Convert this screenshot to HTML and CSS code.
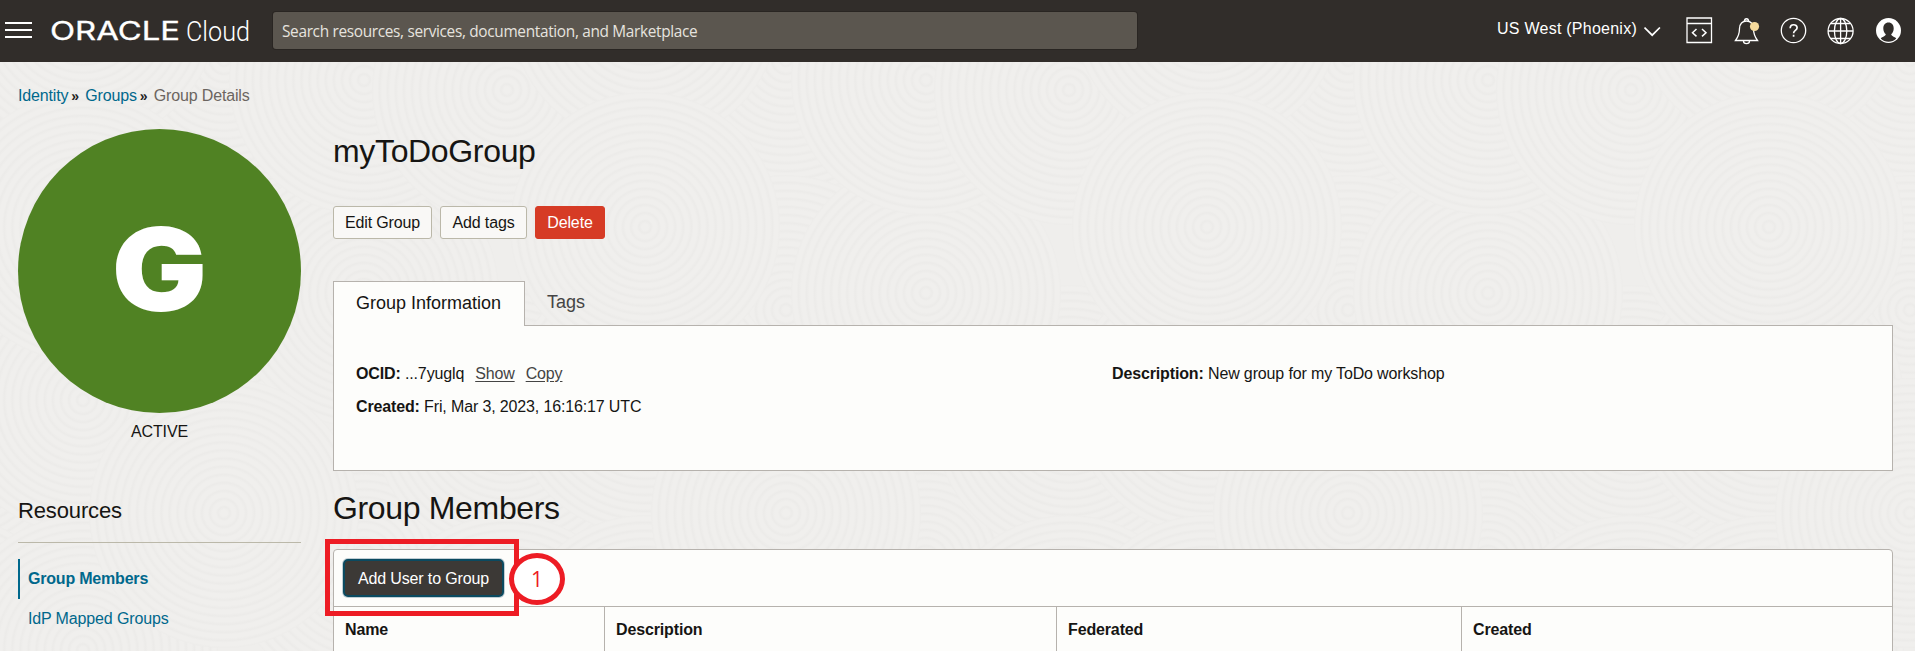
FILE: index.html
```html
<!DOCTYPE html>
<html lang="en">
<head>
<meta charset="utf-8">
<title>Group Details</title>
<link rel="stylesheet" href="styles.css">
</head>
<body>
<svg class="texture" width="1915" height="651" aria-hidden="true">
  <defs>
    <radialGradient id="rings" cx="0.5" cy="0.5" r="0.03" spreadMethod="repeat">
      <stop offset="0" stop-color="#f0efed"/>
      <stop offset="0.4" stop-color="#f0efed"/>
      <stop offset="0.75" stop-color="#ecebe9"/>
      <stop offset="1" stop-color="#f0efed"/>
    </radialGradient>
    <circle id="disc" r="135" fill="url(#rings)"/>
    <g id="tile">
      <use href="#disc" x="141" y="60"/><use href="#disc" x="0" y="10"/>
      <use href="#disc" x="141" y="310"/><use href="#disc" x="281" y="560"/>
      <use href="#disc" x="424" y="420"/><use href="#disc" x="0" y="400"/>
      <use href="#disc" x="281" y="293"/><use href="#disc" x="0" y="227"/>
      <use href="#disc" x="281" y="80"/><use href="#disc" x="424" y="90"/>
      <use href="#disc" x="424" y="650"/><use href="#disc" x="0" y="650"/>
      <use href="#disc" x="141" y="513"/>
    </g>
  </defs>
  <rect width="1915" height="651" fill="#efeeec"/>
  <use href="#tile" x="-479"/><use href="#tile" x="83"/><use href="#tile" x="645"/><use href="#tile" x="1207"/><use href="#tile" x="1769"/>
</svg>

<header class="topbar">
  <svg class="menu" width="27" height="16" viewBox="0 0 27 16"><path d="M0 1h27M0 8h27M0 15h27" stroke="#fff" stroke-width="2"/></svg>
  <svg class="logo" width="204" height="34" viewBox="0 0 204 34" fill="#fff">
    <text class="logo-oracle" x="0" y="24" textLength="130" lengthAdjust="spacingAndGlyphs">ORACLE</text>
    <text class="logo-cloud" x="136" y="24.500" textLength="64" lengthAdjust="spacingAndGlyphs">Cloud</text>
  </svg>
  <div class="search"><span>Search resources, services, documentation, and Marketplace</span></div>
  <div class="region">US West (Phoenix)</div>
  <svg class="icons" width="271" height="32" viewBox="1645 15 271 32" fill="none" stroke="#fff" stroke-width="1.3">
    <path d="M1645.500 27.500l7.700 7.700 7.700-7.700" stroke-width="1.700"/>
    <path d="M1688 18h24.500v24.500h-24.500zM1688 23.500h24.500"/>
    <path d="M1697.500 29l-4 3.700 4 3.700M1703 29l4 3.700-4 3.700" stroke-width="1.500"/>
    <path d="M1736.500 40.500h22c-3-4-4-7-4-12 0-4.500-3-7.500-7-7.500s-7 3-7 7.500c0 5-1 8-4 12z"/>
    <path d="M1745.500 21c0-3 4-3 4 0M1744.500 41c0 3.500 6 3.500 6 0"/>
    <circle cx="1755.500" cy="26.500" r="4.600" fill="#f6da9c" stroke="none"/>
    <circle cx="1794.500" cy="30.500" r="12.200"/>
    <path d="M1791.200 28.200c0-4.600 6.900-4.400 6.900-.4 0 2.600-3.500 2.600-3.500 5.400M1794.600 34.700v2" stroke-width="1.700"/>
    <circle cx="1841.600" cy="31" r="12.500"/>
    <ellipse cx="1841.600" cy="31" rx="6.200" ry="12.500"/>
    <path d="M1841.600 18.500v25M1829 31h25M1831.500 23.500h20.200M1831.500 38.500h20.200"/>
    <circle cx="1889.500" cy="30.500" r="12.500" fill="#fff" stroke="none"/>
    <path d="M1889.500 22.500c-3.300 0-5.200 2.500-5.200 6 0 2.500 1 4.500 2.500 5.800-.3 2.200-3.500 2.400-5 4.200 3.800 4.400 11.600 4.400 15.400 0-1.500-1.800-4.700-2-5-4.200 1.500-1.300 2.500-3.300 2.500-5.800 0-3.500-1.900-6-5.200-6z" fill="#312d2a" stroke="none"/>
  </svg>
</header>

<nav class="crumbs"><a>Identity</a><i>»</i><a>Groups</a><i>»</i><span>Group Details</span></nav>

<div class="page">
  <aside class="side">
    <div class="avatar"><span>G</span></div>
    <div class="state">ACTIVE</div>
    <h2 class="side-title">Resources</h2>
    <a class="side-link active">Group Members</a>
    <a class="side-link">IdP Mapped Groups</a>
  </aside>
  <main class="main">
    <h1 class="title">myToDoGroup</h1>
    <div class="actions">
      <button class="btn edit">Edit Group</button>
      <button class="btn tags">Add tags</button>
      <button class="btn delete">Delete</button>
    </div>
    <div class="tabs"><div class="tab current">Group Information</div><div class="tab">Tags</div></div>
    <section class="info">
      <div class="col">
        <p><b>OCID:</b> <span class="ocid">...7yuglq</span><u>Show</u><u>Copy</u></p>
        <p><b>Created:</b> Fri, Mar 3, 2023, 16:16:17 UTC</p>
      </div>
      <div class="col"><p><b>Description:</b> New group for my ToDo workshop</p></div>
    </section>
    <h1 class="title members">Group Members</h1>
    <section class="table">
      <div class="tools">
        <button class="add">Add User to Group</button>
        <div class="mark-box"></div>
        <div class="mark-num">1</div>
      </div>
      <div class="thead"><div>Name</div><div>Description</div><div>Federated</div><div>Created</div></div>
    </section>
  </main>
</div>
</body>
</html>
```
FILE: styles.css
```css
* { box-sizing: border-box; }
body {
  margin: 0; width: 1916px; height: 651px; overflow: hidden; position: relative;
  border-right: 1px solid #fff; background: #efeeec;
  font: 16px/20px "Liberation Sans", Arial, sans-serif; letter-spacing: -0.14px; color: #161513;
}
.texture { position: absolute; left: 0; top: 0; z-index: -1; }
.topbar { display: flex; height: 62px; background: #312d2a; align-items: flex-start; }
.menu { margin: 22px 0 0 5px; flex: none; }
.logo { margin: 16px 0 0 18px; flex: none; overflow: visible; letter-spacing: 0; }
.logo-oracle { font: 400 25px Inter, sans-serif; stroke: #fff; stroke-width: 0.3px; }
.logo-cloud { font: 300 27px Roboto, sans-serif; }
.search {
  margin: 12px 0 0 19px; width: 864px; height: 37px; flex: none; border-radius: 3px;
  background: #5b564f; box-shadow: 0 0 0 1px #292522; color: #e6e3df;
  font: 15.4px/39px "Open Sans", "Noto Sans", sans-serif; letter-spacing: -0.33px; padding-left: 9px; white-space: nowrap;
}
.region { margin: 19px 0 0 360px; width: 148px; color: #fff; white-space: nowrap; letter-spacing: 0.25px; }
.icons { margin-top: 15px; margin-left: 1px; flex: none; }
.crumbs { display: flex; height: 67px; padding: 24px 0 0 18px; color: #6b6560; letter-spacing: -0.16px; }
.crumbs a { color: #00688c; }
.crumbs i { font-style: normal; font-weight: bold; font-size: 14px; color: #222; width: 17px; padding-left: 3px; }
.page { display: flex; }
.side { width: 333px; padding-left: 18px; }
.avatar {
  width: 283px; height: 284px; border-radius: 50%; background: #508223; color: #fff;
  font: 900 115px/282px Inter, sans-serif; letter-spacing: 0; text-align: center;
}
.avatar span { display: inline-block; transform: scaleX(1.1); }
.state { width: 283px; text-align: center; margin-top: 9px; }
.side-title {
  width: 283px; margin: 57px 0 16px; height: 44px; border-bottom: 1px solid #bbb8a9;
  font-size: 22px; line-height: 24px; font-weight: normal;
}
.side-link { display: block; height: 40px; line-height: 40px; padding-left: 10px; color: #00688c; }
.side-link.active { font-weight: bold; letter-spacing: -0.2px; border-left: 2px solid #00688c; padding-left: 8px; }
.main { width: 1560px; }
.title { margin: 4px 0 0; font-size: 32px; line-height: 36px; font-weight: normal; letter-spacing: -0.34px; }
.actions { display: flex; gap: 8px; margin-top: 37px; }
.btn {
  height: 33px; border: 1px solid #bbb8a9; border-radius: 3px; background: #f9f8f6; padding: 0;
  font: inherit; letter-spacing: -0.14px; color: #161513;
}
.edit { width: 99px; }
.tags { width: 87px; }
.delete { width: 70px; background: #d63b25; border-color: #d63b25; color: #fff; }
.tabs { display: flex; margin-top: 42px; font-size: 18px; height: 44px; letter-spacing: 0; }
.tab { line-height: 42px; padding: 0 22px; color: #444; }
.tab.current {
  width: 192px; height: 45px; padding: 0 22px; background: #fdfdfb; border: 1px solid #b6b2ad;
  border-bottom: 0; color: #161513; position: relative; z-index: 1; white-space: nowrap;
}
.info {
  display: grid; grid-template-columns: 756px 1fr; height: 146px; padding: 38px 0 0 22px;
  border: 1px solid #b6b2ad; background: #fdfdfb;
}
.info p { margin: 0 0 13px; }
.info u { margin-left: 11px; color: #444; text-underline-offset: 2px; }
.members { margin-top: 19px; }
.table { margin-top: 23px; border: 1px solid #b6b2ad; border-radius: 4px 4px 0 0; background: #fdfdfb; height: 110px; }
.tools { position: relative; height: 57px; padding: 9px 0 0 9px; border-bottom: 1px solid #b6b2ad; }
.add {
  width: 161px; height: 38px; border: 2px solid #0b4a60; border-radius: 5px; background: #3c3936; padding: 1px 0 0;
  box-shadow: 0 0 0 1px #c1ced4; font: inherit; letter-spacing: -0.14px; color: #fff;
}
.mark-box { position: absolute; left: -9px; top: -11px; width: 194px; height: 77px; border: 5px solid #ed1c24; }
.mark-num {
  position: absolute; left: 175px; top: 3px; width: 56px; height: 52px; border: 5px solid #ed1c24; border-radius: 50%;
  background: #fff; color: #ed1c24; font: 400 21px/42px "Open Sans", sans-serif; text-align: center;
}
.thead { display: grid; grid-template-columns: 271px 452px 405px 1fr; height: 52px; font-weight: bold; }
.thead div { padding: 13px 0 0 11px; border-right: 1px solid #b6b2ad; }
.thead div:last-child { border: 0; }
```
